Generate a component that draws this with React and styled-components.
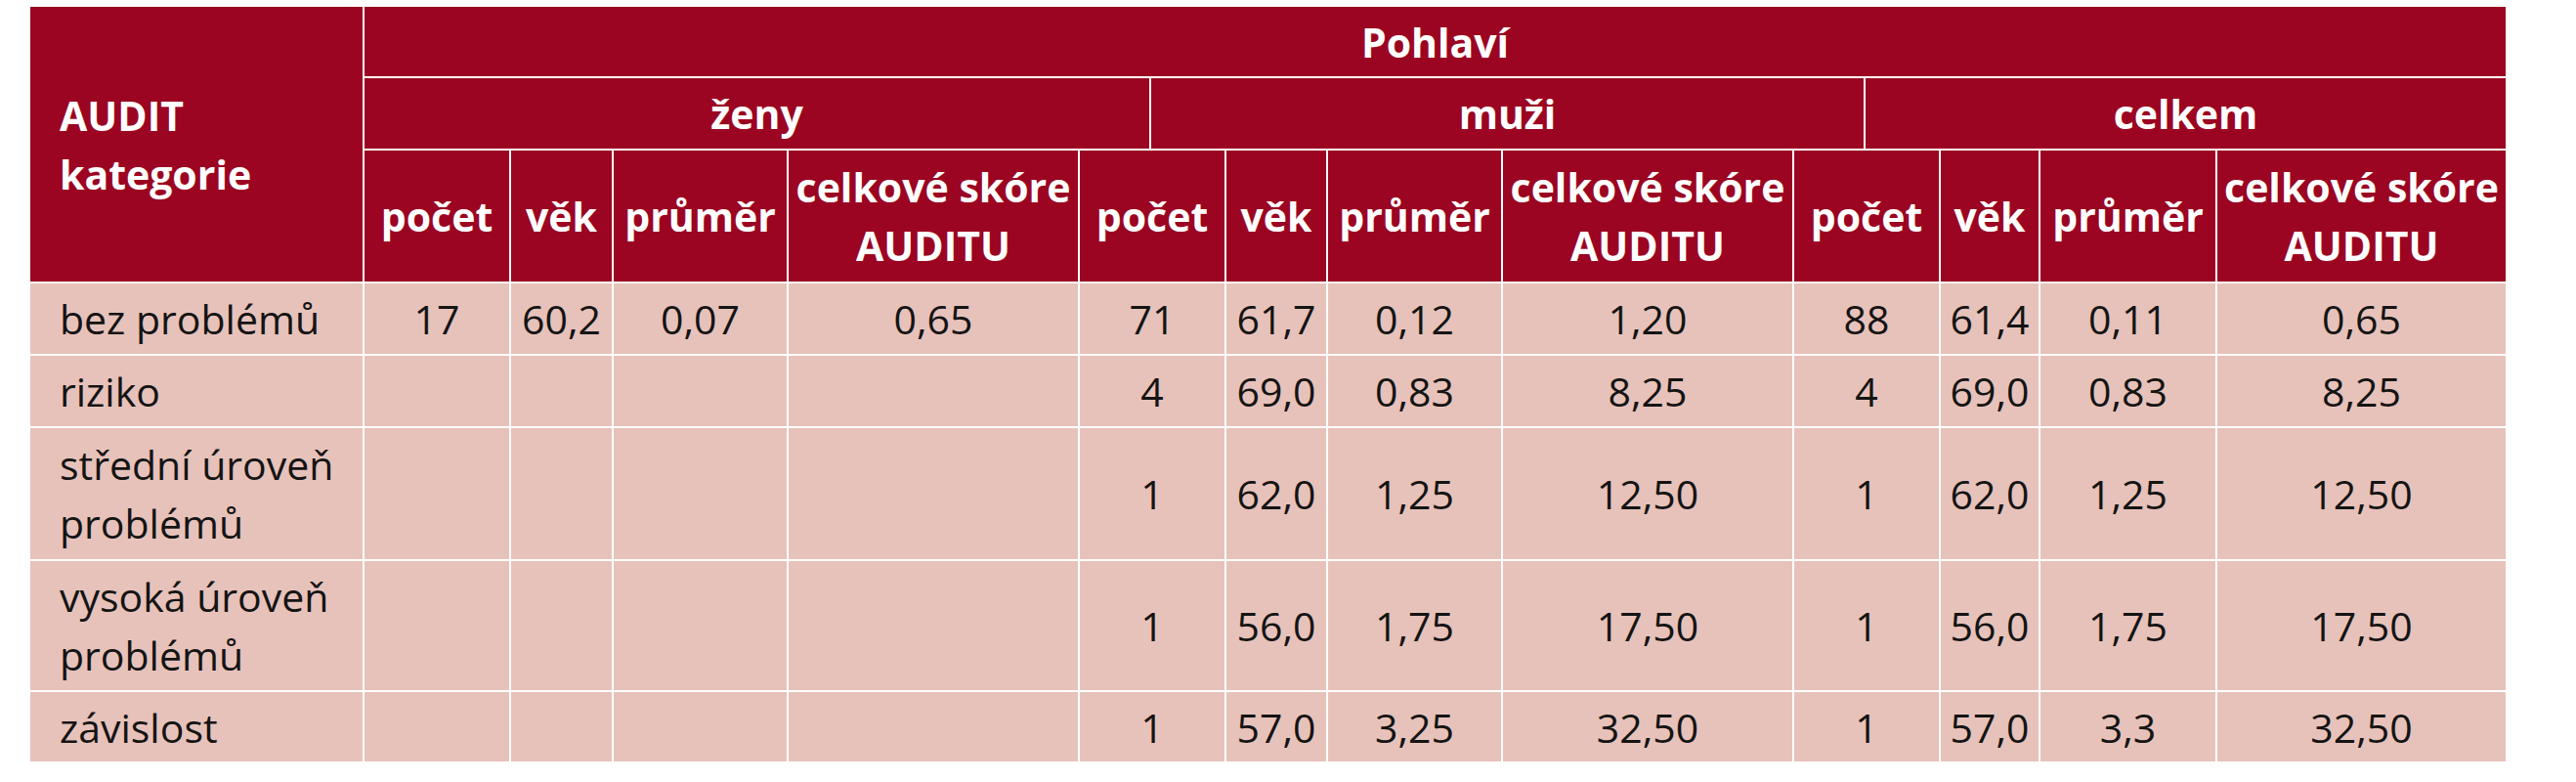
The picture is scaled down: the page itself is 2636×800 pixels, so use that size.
import React from 'react';
import styled, { createGlobalStyle } from 'styled-components';

const GlobalStyle = createGlobalStyle`
  html, body {
    margin: 0;
    padding: 0;
    background: #ffffff;
  }
  body {
    font-family: 'Open Sans', 'Noto Sans', 'Liberation Sans', sans-serif;
  }
`;

const Page = styled.div`
  box-sizing: border-box;
  width: 2636px;
  height: 800px;
  padding: 7px 0 0 31px;
`;

const Table = styled.div`
  display: grid;
  width: 2533px;
  grid-template-columns:
    340px
    148px 103px 177px 296px
    71px 75px 102px 177px 296px
    71px 75px 100px 179px 295px;
  grid-template-rows: 71px 72px 134px 72px 72px 134px 132px 71px;
  gap: 2px;
  font-size: 41px;
  line-height: 60px;
`;

const Cell = styled.div`
  grid-column: span ${(p) => p.$span || 1};
  grid-row: span ${(p) => p.$rows || 1};
  display: flex;
  align-items: center;
  justify-content: ${(p) => (p.$left ? 'flex-start' : 'center')};
  padding: ${(p) => (p.$left ? '0 0 0 30px' : '0 4px')};
  text-align: ${(p) => (p.$left ? 'left' : 'center')};
  white-space: nowrap;
  overflow: hidden;
`;

const HeadCell = styled(Cell)`
  background: #9b0521;
  color: #ffffff;
  font-weight: 700;
`;

const DataCell = styled(Cell)`
  background: #e7c2ba;
  color: #141414;
  font-weight: 400;
`;

const groups = [
  { name: 'ženy', span: 5, countSpan: 1 },
  { name: 'muži', span: 5, countSpan: 2 },
  { name: 'celkem', span: 4, countSpan: 2 },
];

const rows = [
  {
    label: ['bez problémů'],
    values: [
      ['17', '60,2', '0,07', '0,65'],
      ['71', '61,7', '0,12', '1,20'],
      ['88', '61,4', '0,11', '0,65'],
    ],
  },
  {
    label: ['riziko'],
    values: [
      ['', '', '', ''],
      ['4', '69,0', '0,83', '8,25'],
      ['4', '69,0', '0,83', '8,25'],
    ],
  },
  {
    label: ['střední úroveň', 'problémů'],
    values: [
      ['', '', '', ''],
      ['1', '62,0', '1,25', '12,50'],
      ['1', '62,0', '1,25', '12,50'],
    ],
  },
  {
    label: ['vysoká úroveň', 'problémů'],
    values: [
      ['', '', '', ''],
      ['1', '56,0', '1,75', '17,50'],
      ['1', '56,0', '1,75', '17,50'],
    ],
  },
  {
    label: ['závislost'],
    values: [
      ['', '', '', ''],
      ['1', '57,0', '3,25', '32,50'],
      ['1', '57,0', '3,3', '32,50'],
    ],
  },
];

const Lines = ({ lines }) =>
  lines.map((line, i) => (
    <React.Fragment key={i}>
      {i > 0 && <br />}
      {line}
    </React.Fragment>
  ));

const App = () => (
  <Page>
    <GlobalStyle />
    <Table>
      <HeadCell $rows={3} $left>
        <div>
          <Lines lines={['AUDIT', 'kategorie']} />
        </div>
      </HeadCell>
      <HeadCell $span={14}>Pohlaví</HeadCell>

      {groups.map((g) => (
        <HeadCell key={g.name} $span={g.span}>
          {g.name}
        </HeadCell>
      ))}

      {groups.map((g) => (
        <React.Fragment key={g.name}>
          <HeadCell $span={g.countSpan}>počet</HeadCell>
          <HeadCell>věk</HeadCell>
          <HeadCell>průměr</HeadCell>
          <HeadCell>
            <div>
              <Lines lines={['celkové skóre', 'AUDITU']} />
            </div>
          </HeadCell>
        </React.Fragment>
      ))}

      {rows.map((row) => (
        <React.Fragment key={row.label.join(' ')}>
          <DataCell $left>
            <div>
              <Lines lines={row.label} />
            </div>
          </DataCell>
          {row.values.map((vals, gi) =>
            vals.map((v, vi) => (
              <DataCell key={`${gi}-${vi}`} $span={vi === 0 ? groups[gi].countSpan : 1}>
                {v}
              </DataCell>
            ))
          )}
        </React.Fragment>
      ))}
    </Table>
  </Page>
);

export default App;
